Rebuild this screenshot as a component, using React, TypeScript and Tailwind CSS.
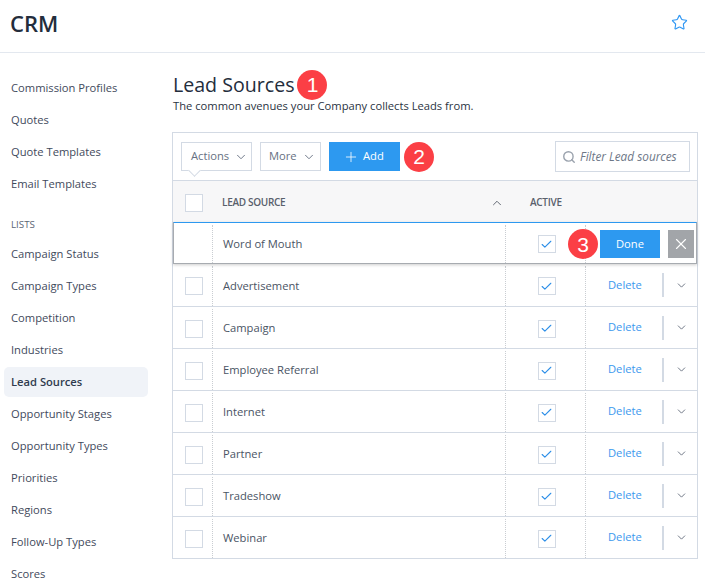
import React from "react";
import { ChevronDown, ChevronUp, Plus, Search, Check, X, Star } from "lucide-react";

const top = ["Commission Profiles", "Quotes", "Quote Templates", "Email Templates"];
const lists = ["Campaign Status", "Campaign Types", "Competition", "Industries", "Lead Sources", "Opportunity Stages", "Opportunity Types", "Priorities", "Regions", "Follow-Up Types", "Scores"];
const rows = ["Advertisement", "Campaign", "Employee Referral", "Internet", "Partner", "Tradeshow", "Webinar"];

function Badge({ n }: { n: number }) {
  return (
    <span className="flex h-[30px] w-[30px] shrink-0 items-center justify-center rounded-full bg-[#fb3f45] font-['Liberation_Sans',sans-serif] text-[21px] leading-none text-white">
      {n}
    </span>
  );
}

function Box({ checked }: { checked?: boolean }) {
  return (
    <span className="flex h-[18px] w-[18px] items-center justify-center border border-[#d3dae4] bg-white">
      {checked && <Check className="h-[13px] w-[13px] text-[#2d8fe8]" strokeWidth={2} />}
    </span>
  );
}

function Nav({ label }: { label: string }) {
  const active = label === "Lead Sources";
  return (
    <div className={`mb-[2px] flex h-[30px] items-center rounded-[5px] pl-[7px] text-[11.2px] ${active ? "bg-[#f0f3f8] font-semibold text-[#2f3b4e]" : "text-[#3f4a5c]"}`}>
      {label}
    </div>
  );
}

export default function App() {
  return (
    <div className="h-[588px] w-[705px] overflow-hidden bg-white font-['Open_Sans',sans-serif] text-[#2a3342]">
      <header className="flex h-[53px] items-center justify-between border-b border-[#e3e8ef] pl-[10px] pr-[17px]">
        <h1 className="pb-[7px] text-[22px] font-semibold leading-none text-[#242d3c]">CRM</h1>
        <Star className="mb-[7px] h-[17px] w-[17px] text-[#2f97f3]" strokeWidth={1.6} />
      </header>
      <div className="flex">
        <aside className="w-[169px] shrink-0 pl-[4px] pr-[21px] pt-[20px]">
          {top.map((t) => <Nav key={t} label={t} />)}
          <div className="mb-[4px] mt-[6px] flex h-[30px] items-end pb-[2px] pl-[7px] text-[9.8px] font-medium text-[#5b6575]">LISTS</div>
          {lists.map((t) => <Nav key={t} label={t} />)}
        </aside>
        <main className="w-[526px] shrink-0 pl-[3px] pt-[18px]">
          <div className="flex h-[27px] items-center gap-[3px] pl-[1px]">
            <h2 className="text-[19.6px] font-medium leading-none text-[#242d3c]">Lead Sources</h2>
            <Badge n={1} />
          </div>
          <p className="mt-[1px] pl-[1px] text-[11.2px] leading-[14px] text-[#2a3342]">The common avenues your Company collects Leads from.</p>
          <div className="mt-[19px] w-[526px] border border-[#d3dae4]">
            <div className="flex h-[47px] items-center pl-[8px] pr-[7px]">
              <div className="relative flex h-[29px] w-[71px] items-center justify-start gap-[5px] border border-[#d3dae4] pl-[9px] text-[11.2px] text-[#677182]">
                Actions <ChevronDown className="h-[14px] w-[14px]" strokeWidth={1.6} />
                <span className="absolute -bottom-[5px] left-[8px] h-[9px] w-[9px] rotate-45 border-b border-r border-[#d3dae4] bg-white" />
              </div>
              <div className="ml-[8px] flex h-[29px] w-[61px] items-center justify-start gap-[5px] border border-[#d3dae4] pl-[8px] text-[11.2px] text-[#677182]">
                More <ChevronDown className="h-[14px] w-[14px]" strokeWidth={1.6} />
              </div>
              <button className="ml-[8px] flex h-[29px] w-[71px] items-center justify-start gap-[4px] bg-[#2d99f0] pl-[14px] text-[11.2px] font-medium text-white">
                <Plus className="h-[16px] w-[16px]" strokeWidth={1.2} /> Add
              </button>
              <span className="ml-[4px]"><Badge n={2} /></span>
              <div className="ml-auto flex h-[31px] w-[135px] items-center gap-[4px] overflow-hidden border border-[#d3dae4] pl-[6px] text-[11.8px] italic text-[#6d7787]">
                <Search className="h-[14px] w-[14px] shrink-0 text-[#9aa2ad]" strokeWidth={2.4} />
                <span className="whitespace-nowrap">Filter Lead sources</span>
              </div>
            </div>
            <div className="flex h-[42px] items-center border-t border-[#d3dae4] bg-[#f7f7f8] pt-[2px] text-[10px] font-semibold tracking-[-0.3px] text-[#59606c]">
              <div className="flex w-[40px] justify-center pl-[2px]"><Box /></div>
              <div className="flex w-[292px] items-center justify-between pl-[9px] pr-[1px]">
                <span>LEAD SOURCE</span>
                <ChevronUp className="h-[14px] w-[14px]" strokeWidth={1.6} />
              </div>
              <div className="w-[81px] pl-[25px]">ACTIVE</div>
            </div>
            <div className="relative z-10 flex h-[42px] items-stretch border border-[#a7abb0] border-t-[#2d99f0] bg-white pt-[2px] text-[11.2px] text-[#4a5464] shadow-[0_1px_3px_rgba(0,0,0,0.2)]">
              <div className="w-[39px] border-r border-dotted border-[#c9cdd2]" />
              <div className="flex w-[292px] items-center pl-[10px]">Word of Mouth</div>
              <div className="flex w-[81px] items-center justify-center border-x border-dotted border-[#c9cdd2] pl-[2px]"><Box checked /></div>
              <div className="absolute right-[2px] top-[6px] flex items-center">
                <Badge n={3} />
                <button className="ml-[2px] h-[28px] w-[60px] bg-[#2d99f0] text-[11.2px] font-medium text-white">Done</button>
                <span className="ml-[8px] flex h-[28px] w-[26px] items-center justify-center bg-[#a2a5a9] text-white">
                  <X className="h-[18px] w-[18px]" strokeWidth={1.5} />
                </span>
              </div>
            </div>
            {rows.map((r, i) => (
              <div key={r} className={`flex h-[42px] items-stretch pt-[2px] text-[11.2px] text-[#4a5464] ${i > 0 ? "border-t border-[#d3dae4]" : ""}`}>
                <div className="flex w-[40px] items-center justify-center border-r border-dotted border-[#c9cdd2] pl-[2px]"><Box /></div>
                <div className="flex w-[292px] items-center pl-[10px]">{r}</div>
                <div className="flex w-[81px] items-center justify-center border-x border-dotted border-[#c9cdd2] pl-[2px]"><Box checked /></div>
                <div className="flex flex-1 items-center pl-[22px]">
                  <span className="w-[54px] pb-[2px] text-[#3c98ee]">Delete</span>
                  <span className="mb-[2px] h-[24px] w-[2px] bg-[#d3dae4]" />
                  <ChevronDown className="mb-[2px] ml-[11px] h-[13px] w-[13px] text-[#5b6575]" strokeWidth={1.6} />
                </div>
              </div>
            ))}
          </div>
        </main>
      </div>
    </div>
  );
}
